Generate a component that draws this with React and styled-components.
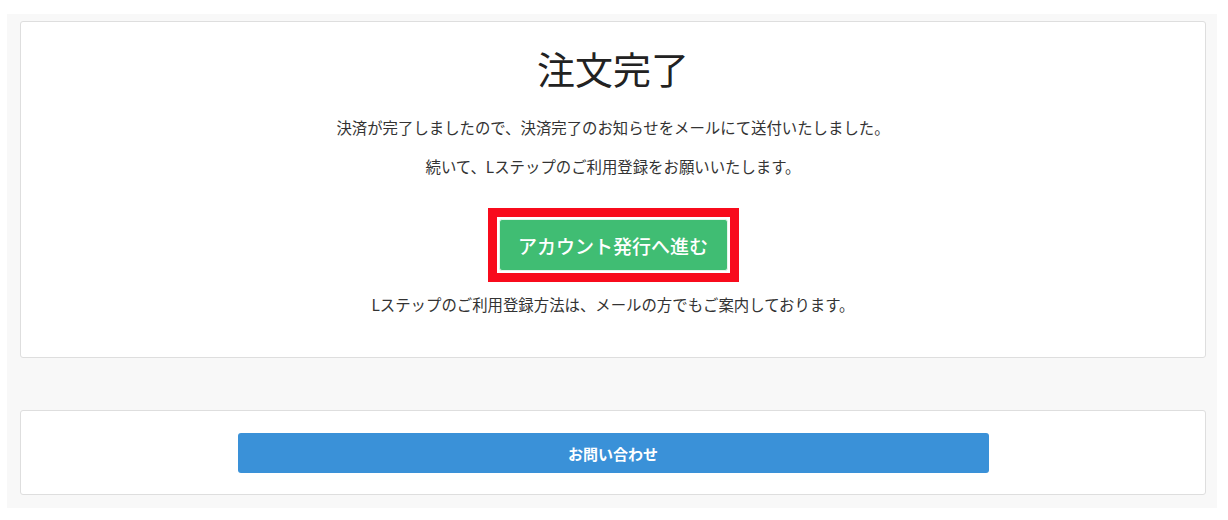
import React from "react";
import styled, { createGlobalStyle } from "styled-components";

const GlobalStyle = createGlobalStyle`
  body {
    margin: 0;
    background: #fff;
    font-family: "Noto Sans CJK JP", "Noto Sans", sans-serif;
    color: #333;
  }
`;

function App() {
  return (
    <>
      <GlobalStyle />
      <Page>
        <Wrapper>
          <Card>
            <CompleteBody>
              <Title>注文完了</Title>
              <Text>決済が完了しましたので、決済完了のお知らせをメールにて送付いたしました。</Text>
              <Text gap={17}>続いて、Lステップのご利用登録をお願いいたします。</Text>
              <Highlight>
                <GreenButton>アカウント発行へ進む</GreenButton>
              </Highlight>
              <Text gap={11}>Lステップのご利用登録方法は、メールの方でもご案内しております。</Text>
            </CompleteBody>
          </Card>
          <Card gap={52}>
            <ContactBody>
              <BlueButton>お問い合わせ</BlueButton>
            </ContactBody>
          </Card>
        </Wrapper>
      </Page>
    </>
  );
}

export default App;

const Page = styled.div`
  padding: 14px 11px 12px 7px;
`;

const Wrapper = styled.div`
  background: #f8f8f8;
  padding: 7px 11px 13px 13px;
`;

const Card = styled.div`
  background: #fff;
  border: 1px solid #dedede;
  border-radius: 3px;
  margin-top: ${(props) => props.gap || 0}px;
`;

const CompleteBody = styled.div`
  display: flex;
  flex-direction: column;
  align-items: center;
  padding: 23px 20px 42px;
`;

const Title = styled.h1`
  margin: 0;
  font-size: 38px;
  line-height: 46px;
  font-weight: 400;
  color: #222;
`;

const Text = styled.p`
  margin: ${(props) => props.gap || 25}px 0 0;
  font-size: 15.4px;
  line-height: 22px;
  color: #333;
`;

const Highlight = styled.div`
  margin-top: 31px;
  border: 9px solid #f80b1c;
  padding: 2px;
  background: #fff;
`;

const GreenButton = styled.button`
  display: block;
  width: 229px;
  height: 52px;
  border: 1px solid #e6f4ec;
  border-radius: 3px;
  background: #40bd73;
  color: #fff;
  font-family: inherit;
  font-size: 19px;
  font-weight: 500;
  cursor: pointer;
`;

const ContactBody = styled.div`
  display: flex;
  justify-content: center;
  padding: 22px 20px 21px;
`;

const BlueButton = styled.button`
  width: 751px;
  height: 40px;
  border: none;
  border-radius: 3px;
  background: #3a91d8;
  color: #fff;
  font-family: inherit;
  font-size: 15px;
  font-weight: 700;
  cursor: pointer;
`;
